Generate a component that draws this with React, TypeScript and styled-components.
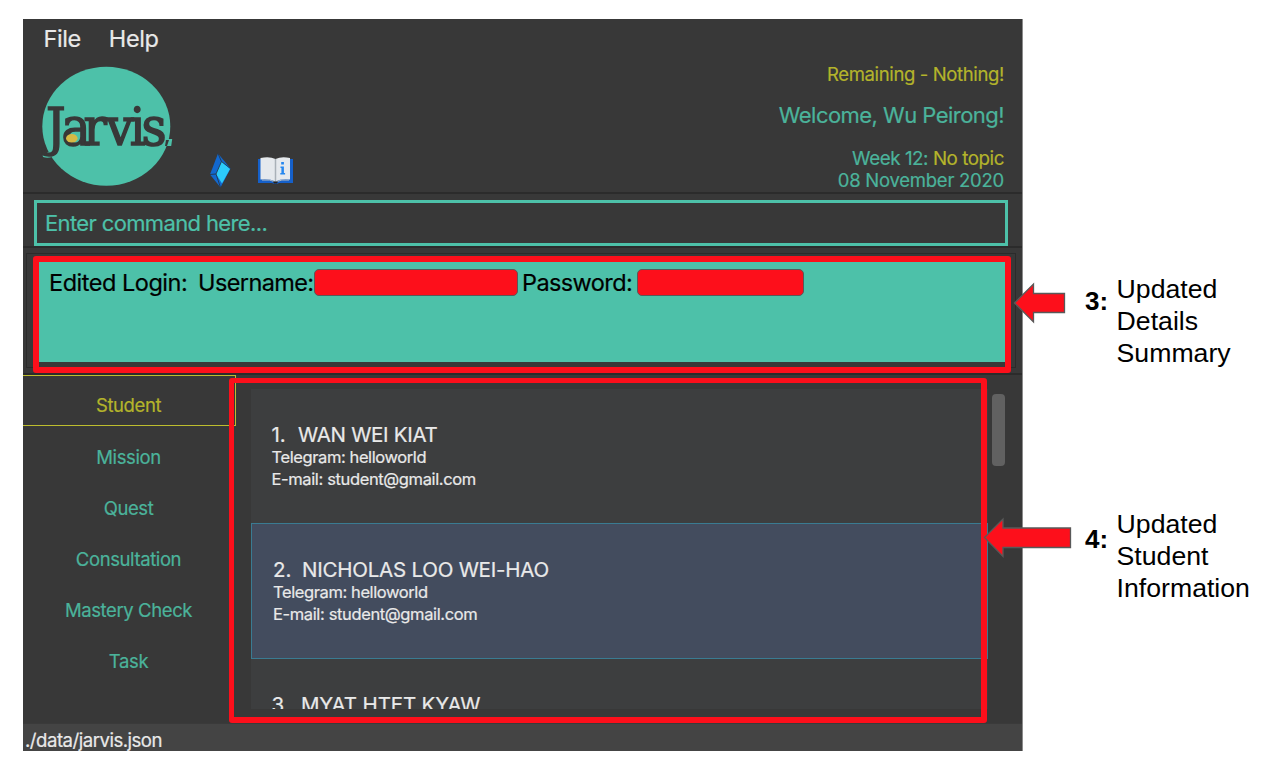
import React from 'react';
import styled, { createGlobalStyle } from 'styled-components';

const color = {
  base: '#383838',
  line: '#2b2b2b',
  teal: '#4dc1a9',
  tealText: '#4bb39b',
  olive: '#b4b42b',
  red: '#fd0f1b',
  outline: '#595959',
  light: '#e9e9e9',
};

const GlobalStyle = createGlobalStyle`
  * { box-sizing: border-box; }
  body { margin: 0; background: #fff; font-family: Inter, 'Liberation Sans', sans-serif; }
`;

const Page = styled.main`
  position: relative;
  display: flex;
  width: 1286px;
  height: 768px;
  padding: 19px 0 0 23px;
  overflow: hidden;
`;

const Window = styled.section`
  display: flex;
  flex-direction: column;
  width: 1000px;
  height: 732px;
  background: ${color.base};
  border-right: 1px solid #8b8b8b;
`;

const Text = styled.span<{ $size: number; $track?: number; $color?: string; $line?: number }>`
  display: block;
  white-space: pre;
  font-size: ${(p) => p.$size}px;
  letter-spacing: ${(p) => p.$track ?? 0}px;
  line-height: ${(p) => p.$line ?? 24}px;
  color: ${(p) => p.$color ?? color.light};
  -webkit-text-stroke: 0.2px currentColor;
`;

const MenuBar = styled.nav`
  display: flex;
  gap: 28px;
  height: 41px;
  padding: 8px 0 0 20.5px;
`;

const Header = styled.header`
  display: flex;
  height: 134px;
  border-bottom: 2px solid ${color.line};
`;

const Logo = styled.svg`
  width: 140px;
  height: 126px;
  margin: 4px 0 0 15px;
`;

const GemIcon = styled.svg`
  width: 22px;
  height: 36px;
  margin: 92px 0 0 31px;
`;

const BookIcon = styled.svg`
  width: 36px;
  height: 28px;
  margin: 96px 0 0 26px;
`;

const Greeting = styled.div`
  display: flex;
  flex-direction: column;
  align-items: flex-end;
  margin-left: auto;
  padding: 2px 18px 0 0;
`;

const Welcome = styled.div`
  margin: 17px 0 21px;
`;

const TopicLine = styled.div`
  display: flex;
`;

const CommandArea = styled.div`
  height: 54px;
  padding: 6px 14px 0 11px;
  border-bottom: 2px solid ${color.line};
`;

const CommandBox = styled.div`
  height: 46px;
  padding: 8px 0 0 8px;
  border: 3px solid ${color.teal};
`;

const ResultArea = styled.div`
  height: 127px;
  padding: 5px 6px 5px 3px;
  border-bottom: 2px solid ${color.line};
`;

const ResultFrame = styled.div`
  height: 115px;
  padding: 4px 9px 0 11px;
  border: 1px solid ${color.line};
`;

const ResultBox = styled.div`
  display: flex;
  height: 104px;
  padding: 13px 0 0 11px;
  background: ${color.teal};
`;

const Redaction = styled.span<{ $width: number }>`
  width: ${(p) => p.$width}px;
  height: 27px;
  margin-top: -2px;
  background: ${color.red};
  border: 1px solid ${color.outline};
  border-radius: 5px;
`;

const Field = styled.div<{ $width: number; $indent?: number }>`
  width: ${(p) => p.$width}px;
  padding-left: ${(p) => p.$indent ?? 0}px;
`;

const Body = styled.div`
  display: flex;
  height: 348px;
`;

const Sidebar = styled.div`
  width: 213px;
`;

const Tab = styled.div<{ $active?: boolean }>`
  display: flex;
  justify-content: center;
  height: 51px;
  padding: ${(p) => (p.$active ? 18 : 19)}px 1px 0 0;
  border: solid ${(p) => (p.$active ? '#bdbd2e' : 'transparent')};
  border-width: 1px 1px 1px 0;
`;

const ListPane = styled.div`
  width: 737px;
  height: 320px;
  margin: 14px 0 0 15px;
  overflow: hidden;
  background: #3d3e3f;
`;

const StudentRow = styled.article<{ $selected?: boolean }>`
  height: ${(p) => (p.$selected ? 136 : 134)}px;
  padding: ${(p) => (p.$selected ? '34px 0 0 21px' : '34px 0 0 20.5px')};
  background: ${(p) => (p.$selected ? '#434c5e' : 'transparent')};
  border: ${(p) => (p.$selected ? '1px solid #3a7b92' : '0')};
`;

const NameLine = styled.div`
  display: flex;
  height: 23px;
`;

const Ordinal = styled.div<{ $width: number }>`
  width: ${(p) => p.$width}px;
`;

const ScrollThumb = styled.div`
  width: 13px;
  height: 72px;
  margin: 19px 0 0 4px;
  background: #616161;
  border-radius: 4px;
`;

const StatusBar = styled.footer`
  height: 28px;
  padding: 4px 0 0 2px;
  background: #444444;
  border-top: 1px solid #3a3a3a;
`;

const Highlight = styled.div<{ $x: number; $y: number; $w: number; $h: number; $edge?: number }>`
  position: absolute;
  left: ${(p) => p.$x}px;
  top: ${(p) => p.$y}px;
  width: ${(p) => p.$w}px;
  height: ${(p) => p.$h}px;
  border: solid ${color.red};
  border-width: ${(p) => p.$edge ?? 6}px 6px 6px ${(p) => p.$edge ?? 6}px;
  border-radius: 3px;
`;

const Arrow = styled.svg<{ $x: number; $y: number }>`
  position: absolute;
  left: ${(p) => p.$x}px;
  top: ${(p) => p.$y}px;
`;

const Notes = styled.aside`
  display: flex;
  flex-direction: column;
  gap: 139px;
  padding: 254px 0 0 62px;
  font-family: 'Liberation Sans', Arial, sans-serif;
  font-size: 26.67px;
  line-height: 32px;
  color: #000;
`;

const Note = styled.div`
  display: flex;
`;

const NoteNumber = styled.strong<{ $drop: number }>`
  width: 31.6px;
  padding-top: ${(p) => p.$drop}px;
  font-size: 26px;
`;

const students = [
  { no: '1.', name: 'WAN WEI KIAT', track: -0.3, indent: 26.5 },
  { no: '2.', name: 'NICHOLAS LOO WEI-HAO', track: -0.23, indent: 29, selected: true },
  { no: '3.', name: 'MYAT HTET KYAW', track: -0.15, indent: 29.5 },
];

const tabs = [
  { label: 'Student', active: true },
  { label: 'Mission' },
  { label: 'Quest' },
  { label: 'Consultation' },
  { label: 'Mastery Check' },
  { label: 'Task' },
];

const JarvisLogo = () => (
  <Logo viewBox="38 64 140 126">
    <ellipse cx="106.3" cy="126.3" rx="64" ry="59.5" fill={color.teal} />
    <path d="M42 152h7l3 5q-5 1.500-9 0z" fill={color.teal} />
    <text
      transform="scale(.95 1)"
      x="48.500 64.800 87.800 111.600 136.600 149"
      y="145.500"
      fill={color.base}
      stroke={color.base}
      strokeWidth="1.600"
      fontFamily="'DejaVu Serif', serif"
      fontSize="51.500"
    >
      Jarvis
    </text>
    <ellipse cx="71.800" cy="138.300" rx="5.800" ry="4.300" fill="#d5b945" />
    <path d="M165.500 139h6.700l-1 7h-6.200z" fill={color.teal} />
    <path d="M166 140h3l-2 6h-2z" fill={color.base} />
  </Logo>
);

const Gem = () => (
  <GemIcon viewBox="209 152 22 36">
    <path d="M218 153.500L230.500 168.500 220.500 187.500 210 174.500z" fill="#1268cf" />
    <path d="M221.500 161.500L230 169 222 183.500 216 174z" fill="#2ccbfb" />
    <path d="M218 153.500L221.500 161.500 216 174 220.500 187.500M210 174.500L216 174M221.500 161.500L230.500 168.500" fill="none" stroke="#26384c" strokeWidth=".9" />
  </GemIcon>
);

const Book = () => (
  <BookIcon viewBox="257 156 36 28">
    <path d="M258 159h35v24h-14q-3 2-7 0h-14z" fill="#1560ca" />
    <path d="M260.500 158q9-2 15 1 6-3 14.500-1v21.500q-9-1-14.500 2-6-3-15-2z" fill="#e5e9ed" />
    <path d="M275.500 159v22" stroke="#a9b1b8" strokeWidth="1.500" />
    <path d="M262 180q8-1 13.500 2 6-3 13.500-2" fill="none" stroke="#b5bdc4" />
    <path d="M273 181.500h5l-1 2h-3z" fill="#222" />
    <path d="M281.200 162h2.700v2.600h-2.700zM280.500 166.500h3.400v6.500h1.200v1.500h-4.800V173h1.100v-5h-.9z" fill="#2587ef" />
  </BookIcon>
);

export default function App() {
  return (
    <>
      <GlobalStyle />
      <Page>
        <Window>
          <MenuBar>
            <Text $size={23.5} $track={-0.4}>File</Text>
            <Text $size={23.5} $track={-0.4}>Help</Text>
          </MenuBar>
          <Header>
            <JarvisLogo />
            <Gem />
            <Book />
            <Greeting>
              <Text $size={18.5} $track={-0.36} $color={color.olive}>Remaining - Nothing!</Text>
              <Welcome>
                <Text $size={22} $track={-0.54} $color={color.tealText}>Welcome, Wu Peirong!</Text>
              </Welcome>
              <TopicLine>
                <Text $size={18.8} $track={-0.45} $line={22} $color={color.tealText}>Week 12: </Text>
                <Text $size={18.8} $track={-0.45} $line={22} $color={color.olive}>No topic</Text>
              </TopicLine>
              <Text $size={18.5} $track={-0.25} $line={20} $color={color.tealText}>08 November 2020</Text>
            </Greeting>
          </Header>
          <CommandArea>
            <CommandBox>
              <Text $size={22} $track={-0.63} $color={color.teal}>Enter command here...</Text>
            </CommandBox>
          </CommandArea>
          <ResultArea>
            <ResultFrame>
              <ResultBox>
                <Field $width={149}><Text $size={23.5} $track={-0.48} $color="#000">Edited Login:</Text></Field>
                <Field $width={116}><Text $size={23.5} $track={-0.6} $color="#000">Username:</Text></Field>
                <Redaction $width={204} />
                <Field $width={119} $indent={4}><Text $size={23.5} $track={-0.6} $color="#000">Password:</Text></Field>
                <Redaction $width={167} />
              </ResultBox>
            </ResultFrame>
          </ResultArea>
          <Body>
            <Sidebar>
              {tabs.map((t) => (
                <Tab key={t.label} $active={t.active}>
                  <Text $size={18.5} $track={-0.4} $line={22} $color={t.active ? color.olive : color.tealText}>{t.label}</Text>
                </Tab>
              ))}
            </Sidebar>
            <ListPane>
              {students.map((s) => (
                <StudentRow key={s.no} $selected={s.selected}>
                  <NameLine>
                    <Ordinal $width={s.indent}><Text $size={20.5}>{s.no}</Text></Ordinal>
                    <Text $size={20.5} $track={s.track}>{s.name}</Text>
                  </NameLine>
                  <Text $size={16.5} $track={-0.4} $line={22}>Telegram: helloworld</Text>
                  <Text $size={16.5} $track={-0.37} $line={22}>E-mail: student@gmail.com</Text>
                </StudentRow>
              ))}
            </ListPane>
            <ScrollThumb />
          </Body>
          <StatusBar>
            <Text $size={18.6} $track={-0.5}>./data/jarvis.json</Text>
          </StatusBar>
        </Window>
        <Notes>
          <Note>
            <NoteNumber $drop={12}>3:</NoteNumber>
            <div>Updated<br />Details<br />Summary</div>
          </Note>
          <Note>
            <NoteNumber $drop={15}>4:</NoteNumber>
            <div>Updated<br />Student<br />Information</div>
          </Note>
        </Notes>
        <Highlight $x={33} $y={256} $w={978} $h={117} />
        <Highlight $x={229} $y={378} $w={758} $h={345} $edge={5} />
        <Arrow $x={1013} $y={282} width="54" height="42">
          <path d="M1.500 21L20.500 2v9.500h31v19h-31V40z" fill={color.red} stroke={color.outline} strokeWidth="1.300" />
        </Arrow>
        <Arrow $x={983} $y={517} width="90" height="42">
          <path d="M1.500 20.500L20 2v9h67.500v19.500H20V39.500z" fill={color.red} stroke={color.outline} strokeWidth="1.300" />
        </Arrow>
      </Page>
    </>
  );
}
